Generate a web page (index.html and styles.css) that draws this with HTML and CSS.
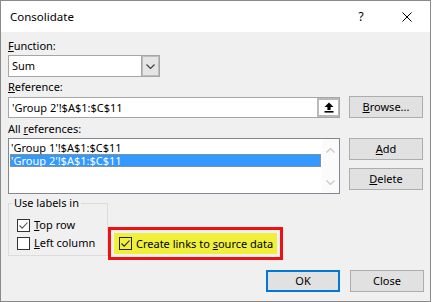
FILE: index.html
```html
<!DOCTYPE html>
<html>
  <head>
    <meta charset="UTF-8" />
    <link rel="stylesheet" href="styles.css">
  </head>
  <body>
    <div class="dialog">
      <div class="titlebar">
        <span class="title">Consolidate</span>
        <span class="caption-btn help">?</span>
        <span class="caption-btn">
          <svg viewBox="0 0 10 10" width="10" height="10">
            <path d="M0.5 0.5 L9.5 9.5 M9.5 0.5 L0.5 9.5" stroke="#000" stroke-width="1" fill="none" />
          </svg>
        </span>
      </div>
      <div class="content">
        <div class="label"><u>F</u>unction:</div>
        <div class="select">
          <span class="value">Sum</span>
          <span class="arrow">
            <svg viewBox="0 0 9 5" width="9" height="5">
              <path d="M0.5 0.5 L4.5 4.5 L8.5 0.5" stroke="#444" stroke-width="1.2" fill="none" />
            </svg>
          </span>
        </div>
        <div class="label ref-label"><u>R</u>eference:</div>
        <div class="row">
          <div class="input">
            <span class="value">'Group 2'!$A$1:$C$11</span>
            <span class="pick">
              <svg viewBox="0 0 10 11" width="10" height="11">
                <path d="M5 0.5 L9.5 5 H6.6 V8 H3.4 V5 H0.5 Z" fill="#000" />
                <rect x="0.5" y="9" width="9" height="1.6" fill="#000" />
              </svg>
            </span>
          </div>
          <button class="btn"><u>B</u>rowse...</button>
        </div>
        <div class="label all-label">All <u>r</u>eferences:</div>
        <div class="row list-row">
          <div class="list">
            <div class="items">
              <div class="item">'Group 1'!$A$1:$C$11</div>
              <div class="item selected">'Group 2'!$A$1:$C$11</div>
            </div>
            <div class="scroll">
              <svg viewBox="0 0 9 5" width="9" height="5">
                <path d="M0.5 4.5 L4.5 0.5 L8.5 4.5" stroke="#c8c8c8" stroke-width="1.2" fill="none" />
              </svg>
              <svg viewBox="0 0 9 5" width="9" height="5">
                <path d="M0.5 0.5 L4.5 4.5 L8.5 0.5" stroke="#c8c8c8" stroke-width="1.2" fill="none" />
              </svg>
            </div>
          </div>
          <div class="side">
            <button class="btn"><u>A</u>dd</button>
            <button class="btn"><u>D</u>elete</button>
          </div>
        </div>
        <div class="options">
          <fieldset class="group">
            <legend>Use labels in</legend>
            <div class="check">
              <span class="box">
                <svg viewBox="0 0 11 11" width="11" height="11"><path d="M1.5 5.5 L4.2 8.2 L9.5 2.5" stroke="#555" stroke-width="1.1" fill="none" /></svg>
              </span>
              <span><u>T</u>op row</span>
            </div>
            <div class="check">
              <span class="box"></span>
              <span><u>L</u>eft column</span>
            </div>
          </fieldset>
          <div class="highlight">
            <div class="mark">
              <div class="check">
                <span class="box">
                  <svg viewBox="0 0 11 11" width="11" height="11"><path d="M1.5 5.5 L4.2 8.2 L9.5 2.5" stroke="#222" stroke-width="1.1" fill="none" /></svg>
                </span>
                <span>Create links to <u>s</u>ource data</span>
              </div>
            </div>
          </div>
        </div>
        <div class="footer">
          <button class="btn default">OK</button>
          <button class="btn">Close</button>
        </div>
      </div>
    </div>
  </body>
</html>
```

FILE: styles.css
```css
body {
    margin: 0;
    background: #fff;
    font-family: "Noto Sans", "Open Sans", sans-serif;
    font-size: 11px;
    line-height: 16px;
    color: #000;
}
.dialog {
    box-sizing: border-box;
    width: 431px;
    height: 302px;
    border: 1px solid #8a8a8a;
    background: #f0f0f0;
    display: flex;
    flex-direction: column;
}
.titlebar {
    height: 31px;
    flex-shrink: 0;
    background: #fff;
    display: flex;
    align-items: stretch;
    padding-left: 9px;
    font-size: 11.5px;
}
.title { flex: 1; align-self: center; }
.caption-btn {
    width: 46px;
    display: flex;
    align-items: center;
    justify-content: center;
}
.help { font-size: 12px; }

.content {
    padding: 6px 6px 0 7px;
}
.label { height: 16px; }
.ref-label { margin-top: 2px; }
.all-label { margin-top: 3px; }

.select {
    box-sizing: border-box;
    margin-top: 1px;
    width: 152px;
    height: 22px;
    display: flex;
    border: 1px solid #a6a6a6;
    background: #fff;
}
.select .value { flex: 1; padding-left: 3px; line-height: 20px; }
.select .arrow {
    width: 17px;
    background: #e5e5e5;
    border-left: 1px solid #a6a6a6;
    box-shadow: inset 0 0 0 1px #bdbdbd;
    display: flex;
    align-items: center;
    justify-content: center;
}

.row {
    display: flex;
    align-items: center;
    gap: 9px;
    margin-top: 1px;
    height: 22px;
}
.input {
    box-sizing: border-box;
    width: 332px;
    height: 21px;
    display: flex;
    border: 1px solid #a6a6a6;
    background: #fff;
}
.input .value { flex: 1; padding-left: 3px; line-height: 19px; }
.input .pick {
    box-sizing: border-box;
    width: 22px;
    border: 2px solid #b9b9b9;
    border-right-width: 1px;
    background: #fff;
    display: flex;
    align-items: center;
    justify-content: center;
}

.btn {
    box-sizing: border-box;
    width: 74px;
    height: 22px;
    padding: 0;
    font: inherit;
    color: #000;
    background: #e1e1e1;
    border: 1px solid #adadad;
}
.btn.default { border: 2px solid #0078d7; }

.list-row {
    height: auto;
    align-items: flex-start;
}
.list {
    box-sizing: border-box;
    width: 332px;
    height: 56px;
    display: flex;
    border: 1px solid #828790;
    background: #fff;
}
.items { flex: 1; padding: 2px 1px 0 1px; }
.item { height: 13px; line-height: 13px; padding-left: 1px; }
.item.selected {
    background: #3399ff;
    color: #fff;
    outline: 1px dotted #c98a3c;
    outline-offset: -1px;
}
.scroll {
    width: 17px;
    display: flex;
    flex-direction: column;
    align-items: center;
    justify-content: space-between;
    padding: 9px 0 8px;
    background: #fbfbfb;
}
.side {
    display: flex;
    flex-direction: column;
    gap: 8px;
}

.options {
    display: flex;
    align-items: flex-start;
    margin-top: 1px;
}
.group {
    box-sizing: border-box;
    width: 100px;
    margin: 0;
    padding: 5px 4px 3px 8px;
    border: 1px solid #dcdcdc;
}
.group legend {
    padding: 0 2px;
    margin-left: -5px;
}
.check {
    display: flex;
    align-items: center;
    gap: 4px;
    height: 18px;
    white-space: nowrap;
}
.box {
    box-sizing: border-box;
    width: 13px;
    height: 13px;
    border: 1px solid #333;
    background: #fff;
    display: flex;
    align-items: center;
    justify-content: center;
}
.highlight {
    margin-top: 32px;
    border: 3px solid #ee1111;
    padding: 3px;
}
.mark {
    box-sizing: border-box;
    width: 163px;
    height: 21px;
    padding-left: 5px;
    background: #efef3c;
    display: flex;
    align-items: center;
}
.mark .box { background: transparent; border-color: #222; }

.footer {
    display: flex;
    justify-content: flex-end;
    gap: 10px;
    margin-top: 10px;
}
```
